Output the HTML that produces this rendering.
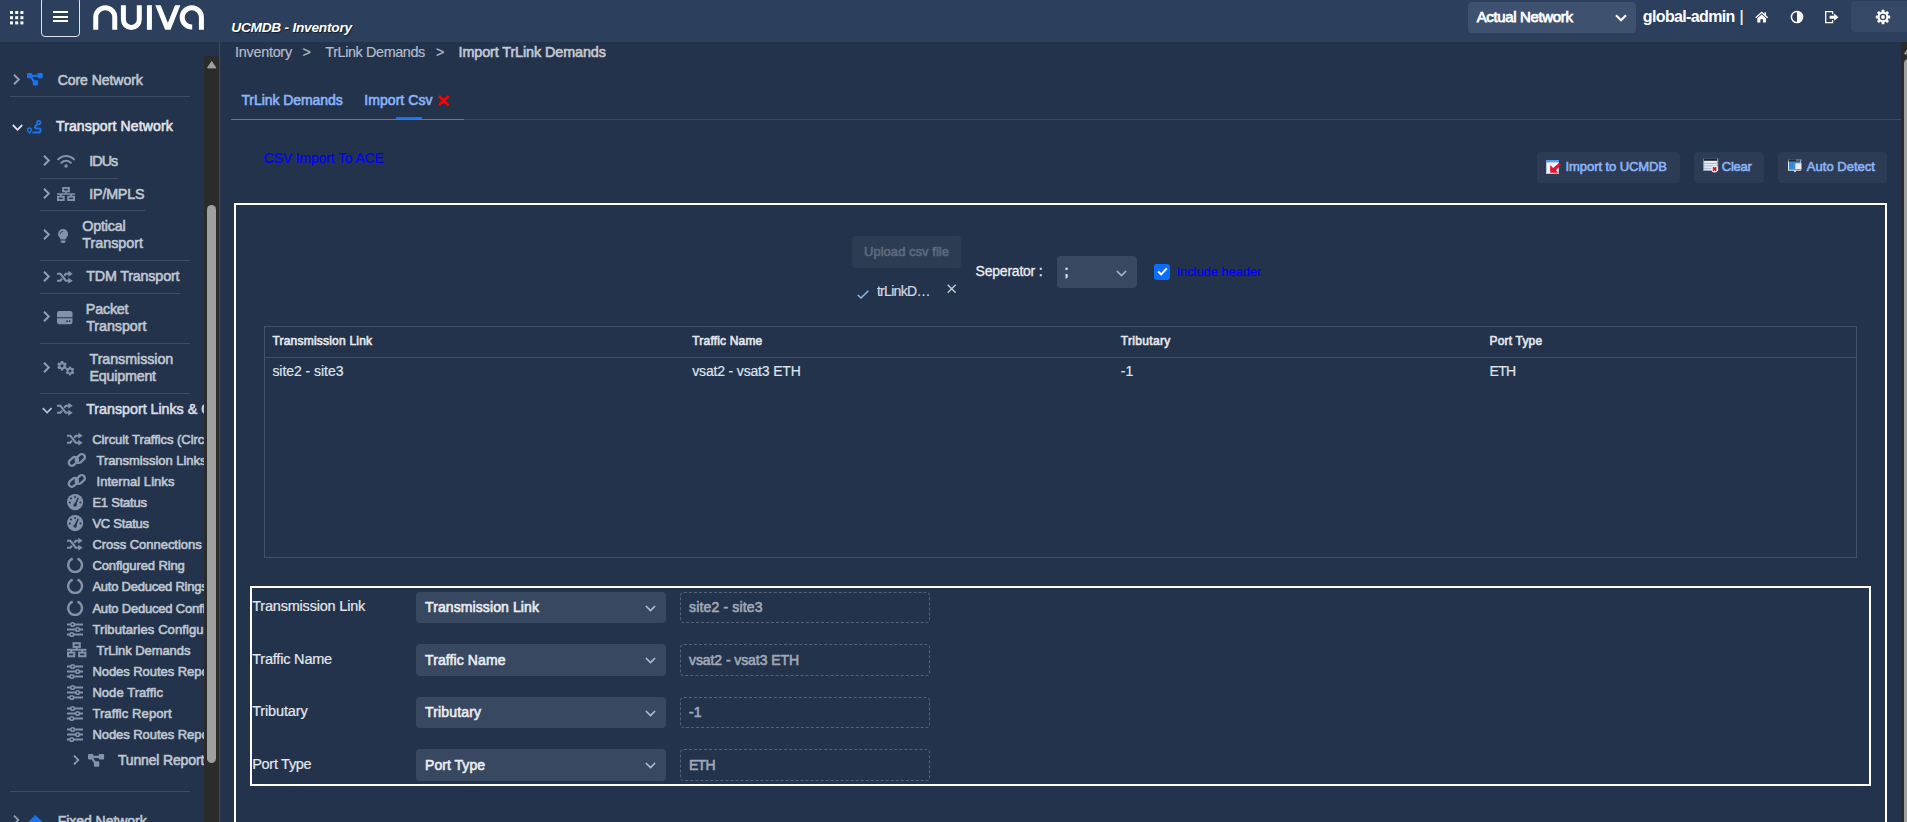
<!DOCTYPE html>
<html lang="en">
<head>
<meta charset="utf-8">
<title>UCMDB - Inventory</title>
<style>
*{box-sizing:border-box;margin:0;padding:0}
html,body{width:1907px;height:822px;overflow:hidden;background:#23334b;font-family:"Liberation Sans",sans-serif;color:#e4e7ec}
.abs{position:absolute}
#main{position:absolute;left:0;top:0;width:1901px;height:822px;overflow:hidden}
#side{position:absolute;left:0;top:0;width:204px;height:822px;overflow:hidden;background:#23334b}
#hdr{position:absolute;left:0;top:0;width:1907px;height:42px;background:#2c3f5c;overflow:hidden}
.t{position:absolute;white-space:nowrap;line-height:1;-webkit-text-stroke:0.2px}
.b{font-weight:bold;-webkit-text-stroke:0}
svg{position:absolute;overflow:visible}
.m{-webkit-text-stroke:0.6px}
</style>
</head>
<body>
<div id="main">
<div class="t" style="left:235.1px;top:44.9px;font-size:14.4px;letter-spacing:-0.275px;color:#b4bcc9;">Inventory</div>
<div class="t" style="left:302.6px;top:44.9px;font-size:14.4px;color:#b4bcc9;">&gt;</div>
<div class="t" style="left:325.3px;top:44.9px;font-size:14.4px;letter-spacing:-0.388px;color:#b4bcc9;">TrLink Demands</div>
<div class="t" style="left:435.9px;top:44.9px;font-size:14.4px;color:#b4bcc9;">&gt;</div>
<div class="t m" style="left:458.5px;top:44.9px;font-size:14.4px;letter-spacing:-0.108px;color:#c3c9d4;">Import TrLink Demands</div>
<div class="t m" style="left:241.4px;top:93.0px;font-size:14px;letter-spacing:-0.068px;color:#8ab4f8;">TrLink Demands</div>
<div class="t m" style="left:364.3px;top:93.0px;font-size:14px;letter-spacing:0.057px;color:#8ab4f8;">Import Csv</div>
<svg style="left:438px;top:95px" width="11.6" height="11.4" viewBox="0 0 11.6 11.4" ><path d="M1 1L10.6 10.4M10.6 1L1 10.4" stroke="#ff0000" stroke-width="2.5" fill="none"/></svg>
<div class="abs" style="left:231px;top:119px;width:233px;height:1px;background:#67768d"></div>
<div class="abs" style="left:464px;top:119px;width:1437px;height:1px;background:#3a4a66"></div>
<div class="abs" style="left:396px;top:117px;width:26px;height:2px;background:#1a73e8"></div>
<div class="t" style="left:263.8px;top:151.0px;font-size:14px;letter-spacing:-0.168px;color:#0000ff;">CSV Import To ACE</div>
<div class="abs" style="left:1537px;top:152px;width:143px;height:31px;background:#2d3c54;border-radius:4px"></div>
<div class="abs" style="left:1694px;top:152px;width:70px;height:31px;background:#2d3c54;border-radius:4px"></div>
<div class="abs" style="left:1778px;top:152px;width:109px;height:31px;background:#2d3c54;border-radius:4px"></div>
<div class="t m" style="left:1565.6px;top:160.0px;font-size:13px;letter-spacing:-0.084px;color:#8ab4f8;">Import to UCMDB</div>
<div class="t m" style="left:1721.8px;top:160.0px;font-size:13px;letter-spacing:-0.270px;color:#8ab4f8;">Clear</div>
<div class="t m" style="left:1806.8px;top:160.0px;font-size:13px;letter-spacing:0.026px;color:#8ab4f8;">Auto Detect</div>
<svg style="left:1546px;top:159.5px" width="14" height="14" viewBox="0 0 14 14" ><rect x="0.5" y="0.5" width="12" height="13" fill="#f4f6fa" stroke="#b8c4d6" stroke-width="1"/><rect x="0" y="0" width="13" height="2.4" fill="#5b9bf0"/><path d="M4.2 5V12.8H12.4L9.9 10.3L15 4.9L13 3L7.2 8.1Z" fill="#e5102f"/></svg>
<svg style="left:1703.3px;top:158px" width="15.5" height="14.5" viewBox="0 0 14.5 14" ><rect x="0.5" y="1" width="13.5" height="11" fill="#e9edf3" stroke="#9aa7ba" stroke-width="1"/><rect x="0.5" y="0.5" width="13" height="2.2" fill="#1d2430"/><path d="M1 5.2H13M1 7.6H13M1 10H9" stroke="#9fb0c8" stroke-width="0.9"/><circle cx="11" cy="10.6" r="3.3" fill="#eef1f5"/><path d="M9.4 9L12.6 12.2M12.6 9L9.4 12.2" stroke="#d40a1e" stroke-width="1.6"/></svg>
<svg style="left:1787.5px;top:159px" width="14.5" height="14" viewBox="0 0 14.5 14" ><rect x="0.5" y="1.2" width="12" height="10" fill="#2f8ae0" stroke="#dfe6f0" stroke-width="1"/><rect x="0.5" y="0.5" width="12" height="2" fill="#1d2430"/><rect x="7" y="4" width="6.5" height="6.4" fill="#e9edf3" stroke="#7f8da3" stroke-width="0.8"/><path d="M9 0.3V2M11 0.3V2M13 0.3V2" stroke="#9fb0c8" stroke-width="0.9"/><path d="M5.5 11.5L7 13.5L8.5 11.5Z" fill="#dfe6f0"/></svg>
<div class="abs" style="left:234px;top:203px;width:1653px;height:700px;border:2px solid #fff"></div>
<div class="abs" style="left:852px;top:236px;width:109px;height:32px;background:#2e3c53;border-radius:4px"></div>
<div class="t m" style="left:864.0px;top:245.4px;font-size:13px;letter-spacing:0.032px;color:#5d6a80;">Upload csv file</div>
<svg style="left:856.9px;top:290px" width="12.2" height="8.8" viewBox="0 0 12.2 8.8" ><path d="M0.8 5L4 8L11.4 0.8" fill="none" stroke="#8ab4f8" stroke-width="1.6"/></svg>
<div class="t" style="left:876.9px;top:284.4px;font-size:14px;letter-spacing:-0.694px;color:#d5dae2;">trLinkD…</div>
<svg style="left:946.6px;top:284px" width="9.4" height="9.6" viewBox="0 0 9.4 9.6" ><path d="M0.7 0.8L8.7 8.8M8.7 0.8L0.7 8.8" stroke="#c5cbd6" stroke-width="1.4" fill="none"/></svg>
<div class="t" style="left:975.6px;top:264.0px;font-size:14px;letter-spacing:-0.227px;color:#e9ecf0;-webkit-text-stroke:0.3px #e9ecf0;">Seperator :</div>
<div class="abs" style="left:1057px;top:256px;width:80px;height:32px;background:#384861;border-radius:4px"></div>
<div class="t m" style="left:1064.5px;top:264.0px;font-size:14px;color:#e9ecf0;">;</div>
<svg style="left:1115.5px;top:269.5px" width="11" height="7" viewBox="0 0 11 7" ><path d="M0.9 1L5.5 5.6L10.1 1" fill="none" stroke="#9fb3cf" stroke-width="1.7"/></svg>
<div class="abs" style="left:1154px;top:264px;width:16px;height:16px;background:#0d6efd;border-radius:3px"></div>
<svg style="left:1156.5px;top:267.3px" width="11" height="9" viewBox="0 0 11 9" ><path d="M1.2 4.5L4.2 7.4L9.8 1.4" fill="none" stroke="#fff" stroke-width="2"/></svg>
<div class="t" style="left:1176.5px;top:265.2px;font-size:13px;letter-spacing:-0.086px;color:#0000ff;">Include header</div>
<div class="abs" style="left:264px;top:326px;width:1593px;height:232px;border:1px solid #43526c"></div>
<div class="abs" style="left:265px;top:357px;width:1591px;height:1px;background:#43526c"></div>
<div class="t m" style="left:272.4px;top:335.4px;font-size:12px;letter-spacing:0.215px;">Transmission Link</div>
<div class="t m" style="left:692.3px;top:335.4px;font-size:12px;letter-spacing:0.180px;">Traffic Name</div>
<div class="t m" style="left:1120.8px;top:335.4px;font-size:12px;letter-spacing:0.324px;">Tributary</div>
<div class="t m" style="left:1489.6px;top:335.4px;font-size:12px;letter-spacing:0.170px;">Port Type</div>
<div class="t" style="left:272.4px;top:364.0px;font-size:14px;letter-spacing:-0.041px;color:#dfe3ea;">site2 - site3</div>
<div class="t" style="left:692.3px;top:364.0px;font-size:14px;letter-spacing:-0.173px;color:#dfe3ea;">vsat2 - vsat3 ETH</div>
<div class="t" style="left:1120.8px;top:364.0px;font-size:14px;color:#dfe3ea;">-1</div>
<div class="t" style="left:1489.6px;top:364.0px;font-size:14px;letter-spacing:-0.700px;color:#dfe3ea;">ETH</div>
<div class="abs" style="left:250px;top:586px;width:1621px;height:200px;border:2px solid #fff"></div>
<div class="t" style="left:252.2px;top:598.8px;font-size:14.5px;letter-spacing:-0.201px;">Transmission Link</div>
<div class="abs" style="left:416px;top:592px;width:250px;height:31px;background:#384861;border-radius:4px"></div>
<div class="t m" style="left:425.0px;top:600.3px;font-size:14px;letter-spacing:0.100px;color:#e9ecf0;">Transmission Link</div>
<svg style="left:645px;top:604.5px" width="11" height="7" viewBox="0 0 11 7" ><path d="M0.9 1L5.5 5.6L10.1 1" fill="none" stroke="#a9bcd6" stroke-width="1.7"/></svg>
<div class="abs" style="left:680px;top:592px;width:250px;height:31px;border:1px dashed #55627a;border-radius:4px"></div>
<div class="t m" style="left:689.0px;top:600.3px;font-size:14px;letter-spacing:0.159px;color:#a0a8b6;">site2 - site3</div>
<div class="t" style="left:252.2px;top:651.8px;font-size:14.5px;letter-spacing:-0.199px;">Traffic Name</div>
<div class="abs" style="left:416px;top:644px;width:250px;height:32px;background:#384861;border-radius:4px"></div>
<div class="t m" style="left:425.0px;top:652.8px;font-size:14px;letter-spacing:0.104px;color:#e9ecf0;">Traffic Name</div>
<svg style="left:645px;top:657px" width="11" height="7" viewBox="0 0 11 7" ><path d="M0.9 1L5.5 5.6L10.1 1" fill="none" stroke="#a9bcd6" stroke-width="1.7"/></svg>
<div class="abs" style="left:680px;top:644px;width:250px;height:32px;border:1px dashed #55627a;border-radius:4px"></div>
<div class="t m" style="left:689.0px;top:652.8px;font-size:14px;letter-spacing:-0.079px;color:#a0a8b6;">vsat2 - vsat3 ETH</div>
<div class="t" style="left:252.2px;top:703.8px;font-size:14.5px;letter-spacing:-0.146px;">Tributary</div>
<div class="abs" style="left:416px;top:697px;width:250px;height:31px;background:#384861;border-radius:4px"></div>
<div class="t m" style="left:425.0px;top:705.3px;font-size:14px;letter-spacing:0.160px;color:#e9ecf0;">Tributary</div>
<svg style="left:645px;top:709.5px" width="11" height="7" viewBox="0 0 11 7" ><path d="M0.9 1L5.5 5.6L10.1 1" fill="none" stroke="#a9bcd6" stroke-width="1.7"/></svg>
<div class="abs" style="left:680px;top:697px;width:250px;height:31px;border:1px dashed #55627a;border-radius:4px"></div>
<div class="t m" style="left:689.0px;top:705.3px;font-size:14px;color:#a0a8b6;">-1</div>
<div class="t" style="left:252.2px;top:756.8px;font-size:14.5px;letter-spacing:-0.287px;">Port Type</div>
<div class="abs" style="left:416px;top:749px;width:250px;height:32px;background:#384861;border-radius:4px"></div>
<div class="t m" style="left:425.0px;top:757.8px;font-size:14px;letter-spacing:0.041px;color:#e9ecf0;">Port Type</div>
<svg style="left:645px;top:762px" width="11" height="7" viewBox="0 0 11 7" ><path d="M0.9 1L5.5 5.6L10.1 1" fill="none" stroke="#a9bcd6" stroke-width="1.7"/></svg>
<div class="abs" style="left:680px;top:749px;width:250px;height:32px;border:1px dashed #55627a;border-radius:4px"></div>
<div class="t m" style="left:689.0px;top:757.8px;font-size:14px;letter-spacing:-0.750px;color:#a0a8b6;">ETH</div>
</div>
<div id="side">
<svg style="left:12.7px;top:74.4px" width="7" height="11" viewBox="0 0 7 11" ><path d="M1 0.8L5.8 5.5L1 10.2" fill="none" stroke="#93a0b4" stroke-width="1.9"/></svg>
<svg style="left:27.1px;top:73.4px" width="15.8" height="12.5" viewBox="0 0 15.8 12.5" ><g fill="#1a73e8"><rect x="0" y="0" width="5.3" height="5.3" rx="1"/><rect x="10.5" y="0" width="5.3" height="5.3" rx="1"/><rect x="5.8" y="7.2" width="5.3" height="5.3" rx="1"/></g><path d="M4 2.8H12M3.6 3.4L7.6 9.6" stroke="#1a73e8" stroke-width="2.2" fill="none"/></svg>
<div class="t m" style="left:57.7px;top:72.8px;font-size:14px;letter-spacing:-0.045px;color:#bfc6d1;">Core Network</div>
<div class="abs" style="left:10px;top:96px;width:180px;height:1px;background:#3d4d68"></div>
<svg style="left:12.1px;top:124.3px" width="11" height="7" viewBox="0 0 11 7" ><path d="M0.8 1L5.5 5.8L10.2 1" fill="none" stroke="#dfe3ea" stroke-width="1.8"/></svg>
<svg style="left:27.1px;top:119.7px" width="14.4" height="14" viewBox="0 0 14.4 14" ><g fill="none" stroke="#1a73e8"><circle cx="11.8" cy="2.6" r="1.8" stroke-width="1.7"/><path d="M10.6 4.3Q8 5.6 8 7Q8 8.4 9.8 8.4H12Q13.6 8.4 13.6 10.4Q13.6 12.5 11.8 12.5H5.4" stroke-width="2"/><path d="M2.5 7.9A1.9 1.9 0 0 1 4.4 9.8C4.4 11 2.5 13.1 2.5 13.1C2.5 13.1 0.6 11 0.6 9.8A1.9 1.9 0 0 1 2.5 7.9Z" stroke-width="1.5" stroke-linejoin="round"/></g></svg>
<div class="t m" style="left:56.0px;top:118.6px;font-size:14px;letter-spacing:0.130px;color:#e0e4ea;">Transport Network</div>
<svg style="left:43px;top:155.3px" width="7" height="11" viewBox="0 0 7 11" ><path d="M1 0.8L5.8 5.5L1 10.2" fill="none" stroke="#93a0b4" stroke-width="1.9"/></svg>
<svg style="left:57px;top:155px" width="18.2" height="12.7" viewBox="0 0 18.2 12.7" ><g fill="none" stroke="#8391a9" stroke-width="2" stroke-linecap="round"><path d="M1.1 4.4A11.4 11.4 0 0 1 17.1 4.4"/><path d="M4.4 7.7A6.8 6.8 0 0 1 13.8 7.7"/></g><circle cx="9.1" cy="11" r="1.8" fill="#8391a9"/></svg>
<div class="t m" style="left:89.3px;top:154.2px;font-size:14.3px;letter-spacing:-0.960px;color:#bfc6d1;">IDUs</div>
<div class="abs" style="left:40px;top:178px;width:78px;height:1px;background:#3d4d68"></div>
<svg style="left:43px;top:188.2px" width="7" height="11" viewBox="0 0 7 11" ><path d="M1 0.8L5.8 5.5L1 10.2" fill="none" stroke="#93a0b4" stroke-width="1.9"/></svg>
<svg style="left:57.2px;top:187px" width="18" height="14" viewBox="0 0 18 14" ><g fill="none" stroke="#8391a9" stroke-width="1.9"><rect x="6.1" y="0.95" width="5.8" height="3.4"/><rect x="0.95" y="9.65" width="5.8" height="3.4"/><rect x="11.25" y="9.65" width="5.8" height="3.4"/></g><path d="M0 7H18M9 4.8V7M3.85 7V9.2M14.15 7V9.2" stroke="#8391a9" stroke-width="1.7" fill="none"/></svg>
<div class="t m" style="left:89.3px;top:186.9px;font-size:14.3px;letter-spacing:-0.204px;color:#bfc6d1;">IP/MPLS</div>
<div class="abs" style="left:40px;top:210px;width:105px;height:1px;background:#3d4d68"></div>
<svg style="left:43px;top:229.3px" width="7" height="11" viewBox="0 0 7 11" ><path d="M1 0.8L5.8 5.5L1 10.2" fill="none" stroke="#93a0b4" stroke-width="1.9"/></svg>
<svg style="left:58px;top:228.8px" width="10.2" height="14.2" viewBox="0 0 10.2 14.2" ><path d="M5.1 0A5 5 0 0 0 0.1 5C0.1 6.8 1.1 7.8 1.9 8.9C2.4 9.6 2.6 10 2.6 10.6H7.6C7.6 10 7.8 9.6 8.3 8.9C9.1 7.8 10.1 6.8 10.1 5A5 5 0 0 0 5.1 0Z" fill="#8391a9"/><path d="M2.7 11.4H7.5V12.6L6.6 14H3.6L2.7 12.6Z" fill="#8391a9"/><path d="M2.4 5A2.7 2.7 0 0 1 5.1 2.3" stroke="#23334b" stroke-width="0.8" fill="none"/></svg>
<div class="t m" style="left:82.2px;top:218.8px;font-size:14.3px;letter-spacing:-0.150px;color:#bfc6d1;">Optical</div>
<div class="t m" style="left:82.2px;top:236.4px;font-size:14.3px;letter-spacing:0.018px;color:#bfc6d1;">Transport</div>
<div class="abs" style="left:40px;top:260px;width:150px;height:1px;background:#3d4d68"></div>
<svg style="left:43px;top:270.5px" width="7" height="11" viewBox="0 0 7 11" ><path d="M1 0.8L5.8 5.5L1 10.2" fill="none" stroke="#93a0b4" stroke-width="1.9"/></svg>
<svg style="left:56.9px;top:270.5px" width="15.5" height="12.5" viewBox="0 0 15.5 12.5" ><g fill="none" stroke="#8391a9" stroke-width="2.1"><path d="M0 2.8H3.4L8.8 9.7H12"/><path d="M0 9.7H3.4L5 7.7M7.2 4.8L8.8 2.8H12"/></g><path d="M11.3 -0.2L15.7 2.8L11.3 5.8ZM11.3 6.7L15.7 9.7L11.3 12.7Z" fill="#8391a9"/></svg>
<div class="t m" style="left:86.2px;top:268.7px;font-size:14.3px;letter-spacing:-0.170px;color:#bfc6d1;">TDM Transport</div>
<div class="abs" style="left:40px;top:293px;width:140px;height:1px;background:#3d4d68"></div>
<svg style="left:43px;top:311px" width="7" height="11" viewBox="0 0 7 11" ><path d="M1 0.8L5.8 5.5L1 10.2" fill="none" stroke="#93a0b4" stroke-width="1.9"/></svg>
<svg style="left:56.9px;top:311px" width="15.5" height="13.3" viewBox="0 0 15.5 13.3" ><path d="M2.2 0H13.3Q15.5 0 15.5 2.2V6.2H0V2.2Q0 0 2.2 0Z" fill="#8391a9"/><path d="M0 7.2H15.5V11.1Q15.5 13.3 13.3 13.3H2.2Q0 13.3 0 11.1Z" fill="#8391a9"/><circle cx="12.6" cy="10.2" r="0.9" fill="#23334b"/><circle cx="10" cy="10.2" r="0.9" fill="#23334b"/></svg>
<div class="t m" style="left:85.8px;top:301.8px;font-size:14.3px;letter-spacing:-0.184px;color:#bfc6d1;">Packet</div>
<div class="t m" style="left:86.2px;top:318.8px;font-size:14.3px;letter-spacing:-0.057px;color:#bfc6d1;">Transport</div>
<div class="abs" style="left:40px;top:343px;width:150px;height:1px;background:#3d4d68"></div>
<svg style="left:43px;top:361.5px" width="7" height="11" viewBox="0 0 7 11" ><path d="M1 0.8L5.8 5.5L1 10.2" fill="none" stroke="#93a0b4" stroke-width="1.9"/></svg>
<svg style="left:56.9px;top:360.9px" width="18" height="14.4" viewBox="0 0 18 14.4" ><circle cx="5" cy="4.8" r="3.552" fill="#8391a9"/><rect x="3.704" y="0" width="2.592" height="2.4" fill="#8391a9" transform="rotate(0 5 4.8)"/><rect x="3.704" y="0" width="2.592" height="2.4" fill="#8391a9" transform="rotate(60 5 4.8)"/><rect x="3.704" y="0" width="2.592" height="2.4" fill="#8391a9" transform="rotate(120 5 4.8)"/><rect x="3.704" y="0" width="2.592" height="2.4" fill="#8391a9" transform="rotate(180 5 4.8)"/><rect x="3.704" y="0" width="2.592" height="2.4" fill="#8391a9" transform="rotate(240 5 4.8)"/><rect x="3.704" y="0" width="2.592" height="2.4" fill="#8391a9" transform="rotate(300 5 4.8)"/><circle cx="5" cy="4.8" r="1.6" fill="#23334b"/><circle cx="13" cy="10" r="3.256" fill="#8391a9"/><rect x="11.812" y="5.6" width="2.376" height="2.2" fill="#8391a9" transform="rotate(0 13 10)"/><rect x="11.812" y="5.6" width="2.376" height="2.2" fill="#8391a9" transform="rotate(60 13 10)"/><rect x="11.812" y="5.6" width="2.376" height="2.2" fill="#8391a9" transform="rotate(120 13 10)"/><rect x="11.812" y="5.6" width="2.376" height="2.2" fill="#8391a9" transform="rotate(180 13 10)"/><rect x="11.812" y="5.6" width="2.376" height="2.2" fill="#8391a9" transform="rotate(240 13 10)"/><rect x="11.812" y="5.6" width="2.376" height="2.2" fill="#8391a9" transform="rotate(300 13 10)"/><circle cx="13" cy="10" r="1.5" fill="#23334b"/></svg>
<div class="t m" style="left:89.5px;top:351.9px;font-size:14.3px;letter-spacing:-0.062px;color:#bfc6d1;">Transmission</div>
<div class="t m" style="left:89.5px;top:368.6px;font-size:14.3px;letter-spacing:-0.220px;color:#bfc6d1;">Equipment</div>
<div class="abs" style="left:40px;top:393px;width:150px;height:1px;background:#3d4d68"></div>
<svg style="left:42.4px;top:407px" width="10.3" height="6.8" viewBox="0 0 11 7" ><path d="M0.8 1L5.5 5.8L10.2 1" fill="none" stroke="#b8c0cc" stroke-width="1.8"/></svg>
<svg style="left:56.9px;top:402.9px" width="15.5" height="12.5" viewBox="0 0 15.5 12.5" ><g fill="none" stroke="#8391a9" stroke-width="2.1"><path d="M0 2.8H3.4L8.8 9.7H12"/><path d="M0 9.7H3.4L5 7.7M7.2 4.8L8.8 2.8H12"/></g><path d="M11.3 -0.2L15.7 2.8L11.3 5.8ZM11.3 6.7L15.7 9.7L11.3 12.7Z" fill="#8391a9"/></svg>
<div class="t m" style="left:86.2px;top:401.7px;font-size:14.3px;letter-spacing:-0.030px;color:#d5dae2;">Transport Links &amp; Circuits</div>
<svg style="left:67px;top:433px" width="15.5" height="12.5" viewBox="0 0 15.5 12.5" ><g fill="none" stroke="#8391a9" stroke-width="2.1"><path d="M0 2.8H3.4L8.8 9.7H12"/><path d="M0 9.7H3.4L5 7.7M7.2 4.8L8.8 2.8H12"/></g><path d="M11.3 -0.2L15.7 2.8L11.3 5.8ZM11.3 6.7L15.7 9.7L11.3 12.7Z" fill="#8391a9"/></svg>
<div class="t m" style="left:92.2px;top:433.0px;font-size:13px;letter-spacing:-0.050px;color:#bfc6d1;">Circuit Traffics (Circuits)</div>
<svg style="left:67px;top:451.9px" width="19.8" height="15.8" viewBox="0 0 19.8 15.8" ><g fill="none" stroke="#8391a9" stroke-width="2.3"><rect x="1.3" y="6.2" width="10.2" height="6.2" rx="3.1" transform="rotate(-42 6.4 9.3)"/><rect x="8.2" y="3.4" width="10.2" height="6.2" rx="3.1" transform="rotate(-42 13.3 6.5)"/></g></svg>
<div class="t m" style="left:96.5px;top:454.0px;font-size:13px;letter-spacing:-0.050px;color:#bfc6d1;">Transmission Links</div>
<svg style="left:67px;top:472.9px" width="19.8" height="15.8" viewBox="0 0 19.8 15.8" ><g fill="none" stroke="#8391a9" stroke-width="2.3"><rect x="1.3" y="6.2" width="10.2" height="6.2" rx="3.1" transform="rotate(-42 6.4 9.3)"/><rect x="8.2" y="3.4" width="10.2" height="6.2" rx="3.1" transform="rotate(-42 13.3 6.5)"/></g></svg>
<div class="t m" style="left:96.5px;top:475.0px;font-size:13px;letter-spacing:0.044px;color:#bfc6d1;">Internal Links</div>
<svg style="left:66.8px;top:494.2px" width="16.2" height="16.2" viewBox="0 0 16.2 16.2" ><circle cx="8.1" cy="8.1" r="8.1" fill="#8391a9"/><g fill="#23334b"><circle cx="8.1" cy="3" r="1"/><circle cx="4" cy="4.6" r="1"/><circle cx="2.8" cy="8.6" r="1"/><circle cx="13.4" cy="8.6" r="1"/><circle cx="8.1" cy="11" r="1.7"/><path d="M7.4 10.6L10.6 3.6L11.9 4.1L9 11.2Z"/></g></svg>
<div class="t m" style="left:92.4px;top:496.0px;font-size:13px;letter-spacing:-0.222px;color:#bfc6d1;">E1 Status</div>
<svg style="left:66.8px;top:515.2px" width="16.2" height="16.2" viewBox="0 0 16.2 16.2" ><circle cx="8.1" cy="8.1" r="8.1" fill="#8391a9"/><g fill="#23334b"><circle cx="8.1" cy="3" r="1"/><circle cx="4" cy="4.6" r="1"/><circle cx="2.8" cy="8.6" r="1"/><circle cx="13.4" cy="8.6" r="1"/><circle cx="8.1" cy="11" r="1.7"/><path d="M7.4 10.6L10.6 3.6L11.9 4.1L9 11.2Z"/></g></svg>
<div class="t m" style="left:92.4px;top:517.0px;font-size:13px;letter-spacing:-0.241px;color:#bfc6d1;">VC Status</div>
<svg style="left:67px;top:538px" width="15.5" height="12.5" viewBox="0 0 15.5 12.5" ><g fill="none" stroke="#8391a9" stroke-width="2.1"><path d="M0 2.8H3.4L8.8 9.7H12"/><path d="M0 9.7H3.4L5 7.7M7.2 4.8L8.8 2.8H12"/></g><path d="M11.3 -0.2L15.7 2.8L11.3 5.8ZM11.3 6.7L15.7 9.7L11.3 12.7Z" fill="#8391a9"/></svg>
<div class="t m" style="left:92.4px;top:538.0px;font-size:13px;letter-spacing:-0.033px;color:#bfc6d1;">Cross Connections</div>
<svg style="left:66.8px;top:557.2px" width="16.2" height="16.2" viewBox="0 0 16.2 16.2" ><path d="M10.5 1.6A6.9 6.9 0 1 1 5.7 1.6" fill="none" stroke="#8391a9" stroke-width="2.3"/></svg>
<div class="t m" style="left:92.4px;top:559.0px;font-size:13px;letter-spacing:-0.111px;color:#bfc6d1;">Configured Ring</div>
<svg style="left:66.8px;top:578.2px" width="16.2" height="16.2" viewBox="0 0 16.2 16.2" ><path d="M10.5 1.6A6.9 6.9 0 1 1 5.7 1.6" fill="none" stroke="#8391a9" stroke-width="2.3"/></svg>
<div class="t m" style="left:92.4px;top:580.0px;font-size:13px;letter-spacing:-0.230px;color:#bfc6d1;">Auto Deduced Rings</div>
<svg style="left:66.8px;top:600.2px" width="16.2" height="16.2" viewBox="0 0 16.2 16.2" ><path d="M10.5 1.6A6.9 6.9 0 1 1 5.7 1.6" fill="none" stroke="#8391a9" stroke-width="2.3"/></svg>
<div class="t m" style="left:92.4px;top:602.0px;font-size:13px;letter-spacing:-0.200px;color:#bfc6d1;">Auto Deduced Configured Rings</div>
<svg style="left:67px;top:621.8px" width="16" height="15" viewBox="0 0 16 15" ><path d="M0 2.5H16M0 7.5H16M0 12.5H16" stroke="#8391a9" stroke-width="1.8"/><g fill="#23334b" stroke="#8391a9" stroke-width="1.6"><circle cx="5.6" cy="2.5" r="1.8"/><circle cx="10.6" cy="7.5" r="1.8"/><circle cx="4.8" cy="12.5" r="1.8"/></g></svg>
<div class="t m" style="left:92.4px;top:623.0px;font-size:13px;letter-spacing:0.100px;color:#bfc6d1;">Tributaries Configuration</div>
<svg style="left:67.3px;top:642px" width="19.4" height="15.5" viewBox="0 0 18 14" ><g fill="none" stroke="#8391a9" stroke-width="1.9"><rect x="6.1" y="0.95" width="5.8" height="3.4"/><rect x="0.95" y="9.65" width="5.8" height="3.4"/><rect x="11.25" y="9.65" width="5.8" height="3.4"/></g><path d="M0 7H18M9 4.8V7M3.85 7V9.2M14.15 7V9.2" stroke="#8391a9" stroke-width="1.7" fill="none"/></svg>
<div class="t m" style="left:96.5px;top:644.0px;font-size:13px;letter-spacing:-0.076px;color:#bfc6d1;">TrLink Demands</div>
<svg style="left:67px;top:663.8px" width="16" height="15" viewBox="0 0 16 15" ><path d="M0 2.5H16M0 7.5H16M0 12.5H16" stroke="#8391a9" stroke-width="1.8"/><g fill="#23334b" stroke="#8391a9" stroke-width="1.6"><circle cx="5.6" cy="2.5" r="1.8"/><circle cx="10.6" cy="7.5" r="1.8"/><circle cx="4.8" cy="12.5" r="1.8"/></g></svg>
<div class="t m" style="left:92.4px;top:665.0px;font-size:13px;letter-spacing:-0.050px;color:#bfc6d1;">Nodes Routes Report</div>
<svg style="left:67px;top:684.8px" width="16" height="15" viewBox="0 0 16 15" ><path d="M0 2.5H16M0 7.5H16M0 12.5H16" stroke="#8391a9" stroke-width="1.8"/><g fill="#23334b" stroke="#8391a9" stroke-width="1.6"><circle cx="5.6" cy="2.5" r="1.8"/><circle cx="10.6" cy="7.5" r="1.8"/><circle cx="4.8" cy="12.5" r="1.8"/></g></svg>
<div class="t m" style="left:92.4px;top:686.0px;font-size:13px;letter-spacing:0.058px;color:#bfc6d1;">Node Traffic</div>
<svg style="left:67px;top:705.8px" width="16" height="15" viewBox="0 0 16 15" ><path d="M0 2.5H16M0 7.5H16M0 12.5H16" stroke="#8391a9" stroke-width="1.8"/><g fill="#23334b" stroke="#8391a9" stroke-width="1.6"><circle cx="5.6" cy="2.5" r="1.8"/><circle cx="10.6" cy="7.5" r="1.8"/><circle cx="4.8" cy="12.5" r="1.8"/></g></svg>
<div class="t m" style="left:92.4px;top:707.0px;font-size:13px;letter-spacing:0.090px;color:#bfc6d1;">Traffic Report</div>
<svg style="left:67px;top:726.8px" width="16" height="15" viewBox="0 0 16 15" ><path d="M0 2.5H16M0 7.5H16M0 12.5H16" stroke="#8391a9" stroke-width="1.8"/><g fill="#23334b" stroke="#8391a9" stroke-width="1.6"><circle cx="5.6" cy="2.5" r="1.8"/><circle cx="10.6" cy="7.5" r="1.8"/><circle cx="4.8" cy="12.5" r="1.8"/></g></svg>
<div class="t m" style="left:92.4px;top:728.0px;font-size:13px;letter-spacing:-0.050px;color:#bfc6d1;">Nodes Routes Report (Detailed)</div>
<svg style="left:73.2px;top:754.7px" width="6.4" height="10" viewBox="0 0 7 11" ><path d="M1 0.8L5.8 5.5L1 10.2" fill="none" stroke="#93a0b4" stroke-width="1.9"/></svg>
<svg style="left:87.5px;top:754.2px" width="16.1" height="12.8" viewBox="0 0 15.8 12.5" ><g fill="#8391a9"><rect x="0" y="0" width="5.3" height="5.3" rx="1"/><rect x="10.5" y="0" width="5.3" height="5.3" rx="1"/><rect x="5.8" y="7.2" width="5.3" height="5.3" rx="1"/></g><path d="M4 2.8H12M3.6 3.4L7.6 9.6" stroke="#8391a9" stroke-width="2.2" fill="none"/></svg>
<div class="t m" style="left:117.9px;top:752.7px;font-size:14px;letter-spacing:-0.150px;color:#bfc6d1;">Tunnel Reports</div>
<div class="abs" style="left:10px;top:791px;width:180px;height:1px;background:#3d4d68"></div>
<svg style="left:13px;top:815.3px" width="6.4" height="10" viewBox="0 0 7 11" ><path d="M1 0.8L5.8 5.5L1 10.2" fill="none" stroke="#93a0b4" stroke-width="1.9"/></svg>
<svg style="left:26.7px;top:814.5px" width="16.7" height="14" viewBox="0 0 16.7 14" ><path d="M8.35 0L16.7 8V14H0V8Z" fill="#1a73e8"/></svg>
<div class="t m" style="left:57.7px;top:813.5px;font-size:14px;letter-spacing:-0.039px;color:#bfc6d1;">Fixed Network</div>
</div>
<div class="abs" style="left:204px;top:56px;width:15px;height:766px;background:#2b2b2b"></div>
<svg style="left:206.8px;top:60.8px" width="9.4" height="7.4" viewBox="0 0 9.4 7.4" ><path d="M4.7 0.5L8.9 6.9H0.5Z" fill="#9f9f9f" stroke="#9f9f9f" stroke-width="1" stroke-linejoin="round"/></svg>
<div class="abs" style="left:207px;top:205px;width:9px;height:558px;background:#9f9f9f;border-radius:4.5px"></div>
<div class="abs" style="left:219px;top:42px;width:1px;height:780px;background:#3a4b66"></div>
<div class="abs" style="left:1901px;top:42px;width:6px;height:780px;background:#2b2b2b"></div>
<svg style="left:1903.8px;top:46.8px" width="9.4" height="7.4" viewBox="0 0 9.4 7.4" ><path d="M4.7 0.5L8.9 6.9H0.5Z" fill="#9f9f9f" stroke="#9f9f9f" stroke-width="1" stroke-linejoin="round"/></svg>
<div class="abs" style="left:1904px;top:59px;width:9px;height:800px;background:#9f9f9f;border-radius:4.5px"></div>

<div id="hdr">
<svg style="left:9px;top:10px" width="16" height="16" viewBox="0 0 16 16" fill="#fff"><rect x="1" y="1" width="3" height="3"/><rect x="6.2" y="1" width="3" height="3"/><rect x="11.4" y="1" width="3" height="3"/><rect x="1" y="6.2" width="3" height="3"/><rect x="6.2" y="6.2" width="3" height="3"/><rect x="11.4" y="6.2" width="3" height="3"/><rect x="1" y="11.4" width="3" height="3"/><rect x="6.2" y="11.4" width="3" height="3"/><rect x="11.4" y="11.4" width="3" height="3"/></svg>
<div class="abs" style="left:41px;top:-3px;width:39px;height:40px;border:1px solid #dfe3ea;border-radius:4px"></div>
<div class="abs" style="left:53px;top:11px;width:15px;height:2px;background:#fff"></div>
<div class="abs" style="left:53px;top:15.6px;width:15px;height:2px;background:#fff"></div>
<div class="abs" style="left:53px;top:20.2px;width:15px;height:2px;background:#fff"></div>
<svg style="left:90px;top:2px" width="118" height="31" viewBox="0 0 118 31" fill="none" stroke="#fff" stroke-width="5" role="img" aria-label="nuiva"><title>nuiva</title>
<clipPath id="lc"><rect x="0" y="3.2" width="118" height="24.6"/></clipPath>
<path d="M5.75 27.8V15.2a9.5 9.5 0 0 1 19 0V27.8"/>
<path d="M33.4 3.2V17.5a7.95 7.95 0 0 0 15.9 0V3.2"/>
<line x1="59.4" y1="3.2" x2="59.4" y2="27.8"/>
<path d="M66.72 0L77.85 27.8L88.98 0" stroke-linejoin="miter" stroke-miterlimit="10" clip-path="url(#lc)"/>
<path d="M111.4 27.8V15.4a9.6 9.6 0 1 0 -9.6 9.6h0.4"/>
</svg>
<div class="t b" style="left:231.3px;top:21.4px;font-size:13.7px;letter-spacing:-0.245px;color:#fff;font-style:italic;text-shadow:1px 1px 1px rgba(0,0,0,.55);">UCMDB - Inventory</div>
<div class="abs" style="left:1468px;top:2px;width:168px;height:31px;background:#3e5270;border-radius:4px"></div>
<div class="t m" style="left:1476.7px;top:9.0px;font-size:15px;letter-spacing:-0.352px;color:#fff;-webkit-text-stroke:0.75px;">Actual Network</div>
<svg style="left:1614px;top:13px" width="14" height="10" viewBox="0 0 14 10" fill="none" stroke="#fff" stroke-width="2"><path d="M2 2.2L7 7.3L12 2.2"/></svg>
<div class="t b" style="left:1642.8px;top:8.8px;font-size:16px;letter-spacing:-0.633px;color:#fff;">global-admin</div>
<div class="t" style="left:1739.6px;top:8.8px;font-size:16px;color:#fff;">|</div>
<svg style="left:1754.8px;top:11.2px" width="13.4" height="12.2" viewBox="0 0 15 13" fill="#fff"><path d="M7.5 0.3L0.3 6.6L1.3 7.7L7.5 2.3L13.7 7.7L14.7 6.6L12.3 4.5V1.2H10.6V3Z"/><path d="M7.5 3.6L2.6 7.9V12.6H6V9H9V12.6H12.4V7.9Z"/></svg>
<svg style="left:1789.5px;top:10.4px" width="14" height="14" viewBox="0 0 14 14"><circle cx="7" cy="7" r="5.6" fill="none" stroke="#fff" stroke-width="1.5"/><path d="M7 1.4A5.6 5.6 0 0 1 7 12.6Z" fill="#fff"/></svg>
<svg style="left:1824.6px;top:11.2px" width="13.6" height="12.4" viewBox="0 0 13.6 12.4" fill="none" stroke="#fff"><path d="M7.6 3.2V0.7H0.7V11.7H7.6V9.2" stroke-width="1.3"/><path d="M4.6 4.7H9.2V2.6L13.4 6.2L9.2 9.8V7.7H4.6Z" fill="#fff" stroke="none"/></svg>
<div class="abs" style="left:1851px;top:1px;width:60px;height:31px;background:#354865;border-radius:4px"></div>
<svg style="left:1875px;top:9px" width="16" height="16" viewBox="0 0 16 16"><g fill="#fff"><circle cx="8" cy="8" r="5.4"/><rect x="6.6" y="0.8" width="2.8" height="3" rx="0.5" transform="rotate(0 8 8)"/><rect x="6.6" y="0.8" width="2.8" height="3" rx="0.5" transform="rotate(45 8 8)"/><rect x="6.6" y="0.8" width="2.8" height="3" rx="0.5" transform="rotate(90 8 8)"/><rect x="6.6" y="0.8" width="2.8" height="3" rx="0.5" transform="rotate(135 8 8)"/><rect x="6.6" y="0.8" width="2.8" height="3" rx="0.5" transform="rotate(180 8 8)"/><rect x="6.6" y="0.8" width="2.8" height="3" rx="0.5" transform="rotate(225 8 8)"/><rect x="6.6" y="0.8" width="2.8" height="3" rx="0.5" transform="rotate(270 8 8)"/><rect x="6.6" y="0.8" width="2.8" height="3" rx="0.5" transform="rotate(315 8 8)"/></g><circle cx="8" cy="8" r="3.3" fill="#354865"/><circle cx="8" cy="8" r="1.9" fill="#fff"/></svg>
</div>
</body>
</html>
